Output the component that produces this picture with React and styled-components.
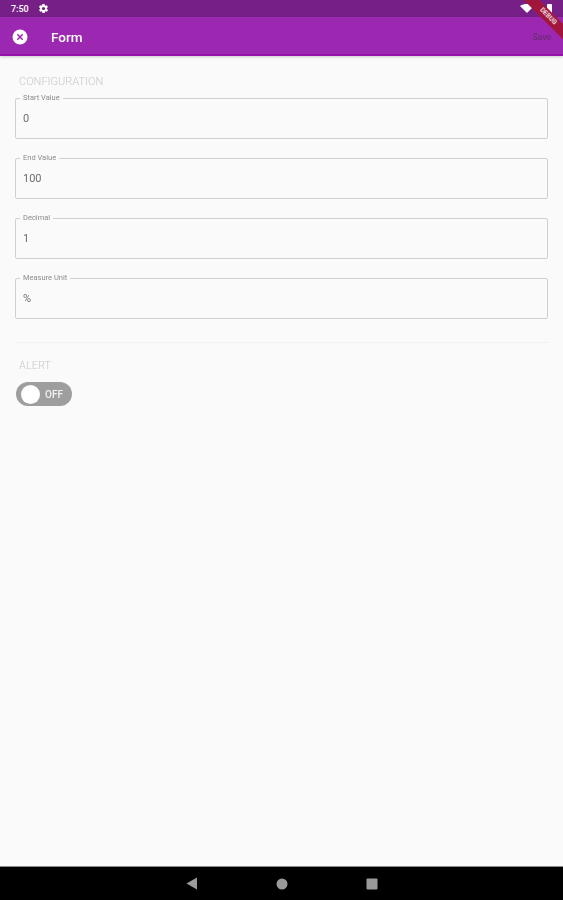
import React from "react";
import styled, { createGlobalStyle } from "styled-components";

const Global = createGlobalStyle`
    html, body { margin: 0; padding: 0; background: #fafafa; }
    body { font-family: Roboto, "Liberation Sans", sans-serif; }
`;

const fields = [
    { label: "Start Value", value: "0" },
    { label: "End Value", value: "100" },
    { label: "Decimal", value: "1" },
    { label: "Measure Unit", value: "%" },
];

const App = () => {
    return (
        <Page>
            <Global />
            <StatusBar>
                <StatusLeft>
                    <Clock>7:50</Clock>
                    <svg width="11" height="11" viewBox="0 0 24 24" fill="#fff">
                        <path d="M19.4 13c.1-.3.1-.7.1-1s0-.7-.1-1l2.1-1.6c.2-.2.2-.4.1-.6l-2-3.5c-.1-.2-.4-.3-.6-.2l-2.5 1c-.5-.4-1.1-.7-1.7-1l-.4-2.7c0-.2-.2-.4-.5-.4h-4c-.2 0-.4.2-.5.4l-.4 2.7c-.6.3-1.1.6-1.7 1l-2.5-1c-.2-.1-.5 0-.6.2l-2 3.5c-.1.2-.1.5.1.6L4.6 11c-.1.3-.1.7-.1 1s0 .7.1 1l-2.1 1.6c-.2.2-.2.4-.1.6l2 3.5c.1.2.4.3.6.2l2.5-1c.5.4 1.1.7 1.7 1l.4 2.7c0 .2.2.4.5.4h4c.2 0 .4-.2.5-.4l.4-2.7c.6-.3 1.1-.6 1.7-1l2.5 1c.2.1.5 0 .6-.2l2-3.5c.1-.2.1-.5-.1-.6L19.4 13zM12 15.5c-1.9 0-3.5-1.6-3.5-3.5s1.6-3.5 3.5-3.5 3.5 1.6 3.5 3.5-1.6 3.5-3.5 3.5z" />
                    </svg>
                </StatusLeft>
                <StatusRight>
                    <svg width="14" height="9" viewBox="0 0 14 9" fill="#fff">
                        <path d="M0 2C3.900-.6 10.100-.6 14 2L7 9z" />
                    </svg>
                    <Battery />
                </StatusRight>
            </StatusBar>
            <AppBar>
                <svg width="16" height="16" viewBox="0 0 16 16">
                    <circle cx="8" cy="8" r="7.500" fill="#fff" />
                    <path d="M5.300 5.300l5.400 5.400M10.700 5.300l-5.400 5.400" stroke="#9c27b0" strokeWidth="1.500" />
                </svg>
                <Title>Form</Title>
                <SaveButton>Save</SaveButton>
            </AppBar>
            <Ribbon>DEBUG</Ribbon>
            <Content>
                <FormSection>
                    <SectionTitle>CONFIGURATION</SectionTitle>
                    <FieldList>
                        {fields.map((f) => (
                            <Field key={f.label}>
                                <FieldLabel>{f.label}</FieldLabel>
                                <FieldValue>{f.value}</FieldValue>
                            </Field>
                        ))}
                    </FieldList>
                </FormSection>
                <Divider />
                <AlertSection>
                    <SectionTitle>ALERT</SectionTitle>
                    <Toggle>
                        <Knob />
                        <ToggleText>OFF</ToggleText>
                    </Toggle>
                </AlertSection>
            </Content>
            <NavBar>
                <svg width="12" height="13" viewBox="0 0 12 13" fill="#9a9a9a">
                    <path d="M11 0.500V12.500L0.500 6.500z" />
                </svg>
                <svg width="12" height="12" viewBox="0 0 12 12" fill="#9a9a9a">
                    <circle cx="6" cy="6" r="5.500" />
                </svg>
                <svg width="12" height="12" viewBox="0 0 12 12" fill="#9a9a9a">
                    <rect x="0.500" y="0.500" width="11" height="11" rx="1" />
                </svg>
            </NavBar>
        </Page>
    );
};

export default App;

const Page = styled.div`
    position: relative;
    width: 563px;
    height: 900px;
    overflow: hidden;
    display: flex;
    flex-direction: column;
    background: #fafafa;
`;

const StatusBar = styled.div`
    height: 17px;
    padding: 0 11px;
    display: flex;
    align-items: center;
    justify-content: space-between;
    background: #761f87;
`;

const StatusLeft = styled.div`
    display: flex;
    align-items: center;
    gap: 9px;
`;

const Clock = styled.span`
    color: #fff;
    font-size: 9px;
    font-weight: 500;
`;

const StatusRight = styled.div`
    display: flex;
    align-items: center;
    gap: 13px;
`;

const Battery = styled.div`
    width: 5px;
    height: 10px;
    border-radius: 1px;
    background: #fff;
`;

const AppBar = styled.div`
    height: 39px;
    padding: 2px 12px 0;
    display: flex;
    align-items: center;
    box-sizing: border-box;
    background: #9c27b0;
    border-bottom: 2px solid #9410a8;
    box-shadow: 0 1px 3px rgba(0, 0, 0, 0.2);
    z-index: 1;
`;

const Title = styled.div`
    margin-left: 23px;
    color: #fff;
    font-size: 13.500px;
    font-weight: 500;
`;

const SaveButton = styled.div`
    margin-left: auto;
    color: #5f2f6c;
    font-size: 8.500px;
`;

const Ribbon = styled.div`
    position: absolute;
    top: 11px;
    right: -25px;
    width: 80px;
    height: 11px;
    line-height: 11px;
    text-align: center;
    transform: rotate(45deg);
    background: #a3163c;
    color: #e8dde0;
    font-size: 6.500px;
    font-weight: 700;
    z-index: 2;
`;

const Content = styled.div`
    flex: 1;
    display: flex;
    flex-direction: column;
    will-change: opacity;
`;

const FormSection = styled.div`
    padding: 19px 15px 0;
`;

const SectionTitle = styled.div`
    height: 13px;
    line-height: 13px;
    padding-left: 4px;
    color: #c8c8c8;
    font-size: 11px;
    font-weight: 300;
`;

const FieldList = styled.div`
    margin-top: 10px;
    display: flex;
    flex-direction: column;
    gap: 19px;
`;

const Field = styled.div`
    position: relative;
    height: 41px;
    box-sizing: border-box;
    padding: 13px 7px 0;
    border: 1px solid #cfcfcf;
    border-radius: 2px;
`;

const FieldLabel = styled.span`
    position: absolute;
    top: -6px;
    left: 4px;
    padding: 0 3px;
    background: #fafafa;
    color: #8c8c8c;
    font-size: 7.500px;
    line-height: 10px;
`;

const FieldValue = styled.div`
    color: #6e6e6e;
    font-size: 11px;
    line-height: 14px;
`;

const Divider = styled.div`
    height: 1px;
    margin: 23px 15px 0;
    background: #f1f1f1;
`;

const AlertSection = styled.div`
    padding: 16px 15px 0;
    display: flex;
    flex-direction: column;
    gap: 10px;
`;

const Toggle = styled.div`
    width: 56px;
    height: 24px;
    margin-left: 1px;
    padding: 0 5px;
    box-sizing: border-box;
    display: flex;
    align-items: center;
    gap: 5px;
    border-radius: 12px;
    background: #9e9e9e;
`;

const Knob = styled.div`
    width: 19px;
    height: 19px;
    border-radius: 50%;
    background: #fff;
`;

const ToggleText = styled.span`
    color: #f2f2f2;
    font-size: 10px;
    font-weight: 500;
`;

const NavBar = styled.div`
    height: 34px;
    box-sizing: border-box;
    padding: 0 185px 0 186px;
    display: flex;
    align-items: center;
    justify-content: space-between;
    background: #000;
    border-top: 1px solid #8a8a8a;
`;
